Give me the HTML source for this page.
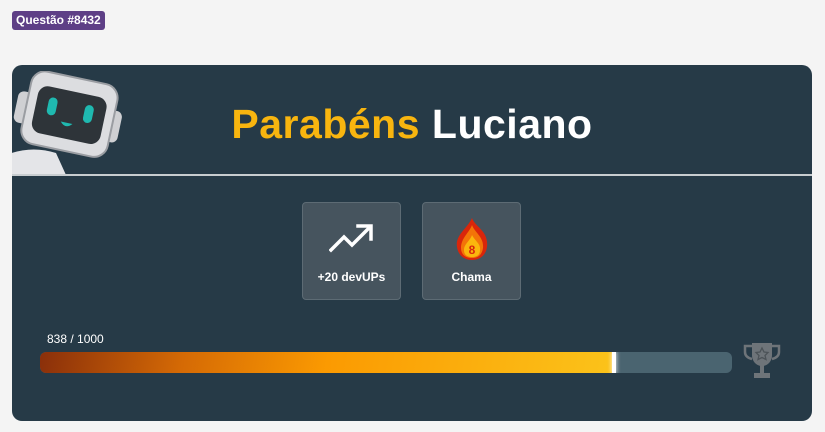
<!DOCTYPE html>
<html><head><style>
body{margin:0;width:825px;height:432px;background:#f4f4f4;font-family:"Liberation Sans",sans-serif;position:relative;overflow:hidden}
.tag{position:absolute;left:12px;top:11px;height:19px;padding:0 4px;background:#5e3f86;color:#fff;font-weight:bold;font-size:12px;line-height:19px;border-radius:3px}
.card{position:absolute;left:12px;top:65px;width:800px;height:356px;background:#263a47;border-radius:10px;overflow:hidden}
.line{position:absolute;left:0;top:109px;width:800px;height:2px;background:#c8cdd0}
.title{position:absolute;left:0;width:800px;top:36px;text-align:center;font-size:41px;font-weight:bold;color:#fff;letter-spacing:0.5px}
.title span{color:#f8b50f}
.box{position:absolute;top:137px;width:97px;height:96px;background:#46545e;border:1.5px solid #5d6b74;border-radius:4px;color:#fff;font-size:12px;font-weight:bold;text-align:center}
.box .lbl{position:absolute;top:67px;width:100%}
.val{position:absolute;left:35px;top:267px;color:#fff;font-size:12px}
.bar{position:absolute;left:28px;top:287px;width:692px;height:21px;background:#4a6470;border-radius:6px;overflow:hidden}
.fill{position:absolute;left:0;top:0;width:574px;height:21px;background:linear-gradient(100deg,#8a2f0a 0%,#d56a05 25%,#fb9a01 50%,#fbc31a 100%);border-radius:6px 0 0 6px}
.mark{position:absolute;left:572px;top:-1px;width:4px;height:23px;background:#fff;box-shadow:0 0 5px #fff}
</style></head><body>
<div class="tag">Questão #8432</div>
<div class="card">
<svg style="position:absolute;left:-6px;top:6px" width="120" height="104" viewBox="0 0 120 104">
<path d="M0 84 Q25 74 50 82 L60 104 L0 104Z" fill="#e4e5e8"/>
<g transform="rotate(12 62 50)">
<rect x="8" y="30" width="14" height="32" rx="6" fill="#cfd0d3"/>
<rect x="102" y="30" width="12" height="32" rx="6" fill="#cfd0d3"/>
<rect x="18" y="6" width="88" height="74" rx="14" fill="#dcdde0" stroke="#9a9da2" stroke-width="2"/>
<rect x="27" y="20" width="70" height="48" rx="10" fill="#2e3439"/>
<rect x="39" y="30" width="9" height="18" rx="4.5" fill="#1fb9b0"/>
<rect x="76" y="30" width="9" height="18" rx="4.5" fill="#1fb9b0"/>
<path d="M55 52 Q61 59 67 52 Z" fill="#1fb9b0"/>
</g>
</svg>
<div class="line"></div>
<div class="title"><span>Parabéns</span> Luciano</div>
<div class="box" style="left:290px"><svg style="position:absolute;left:26px;top:20px" width="46" height="32" viewBox="0 0 46 32"><path d="M2 27 L15 14 L23 22 L41 4 M29 3 H42 V16" fill="none" stroke="#fff" stroke-width="3.5" stroke-linecap="square"/></svg><div class="lbl">+20 devUPs</div></div>
<div class="box" style="left:410px"><svg style="position:absolute;left:30px;top:14px" width="38" height="44" viewBox="0 0 38 44"><path d="M19 1 C22 10 36 14 34 30 C33 38 27 43 19 43 C11 43 5 38 4 30 C2 18 14 12 19 1Z" fill="#d9260b"/><path d="M19 8 C22 16 31 20 30 31 C29 38 25 41 19 41 C13 41 8 38 8 31 C8 21 16 16 19 8Z" fill="#f37408"/><path d="M19 18 C22 24 28 27 27 33 C27 38 24 40 19 40 C14 40 11 38 11 33 C11 27 17 24 19 18Z" fill="#fbb60d"/><text x="19" y="37" font-size="12" fill="#d9260b" text-anchor="middle" font-family="Liberation Sans">8</text></svg><div class="lbl">Chama</div></div>
<div class="val">838 / 1000</div>
<div class="bar"><div class="fill"></div><div class="mark"></div></div>
<svg style="position:absolute;left:730px;top:276px" width="40" height="40" viewBox="0 0 40 40"><path d="M10 2 H30 V14 C30 21 25 25 20 25 C15 25 10 21 10 14Z" fill="#6e7479"/><path d="M10 5 H3 V11 C3 15 6 17 10 18 M30 5 H37 V11 C37 15 34 17 30 18" fill="none" stroke="#6e7479" stroke-width="2.5"/><path d="M20 7 L22 11 L26 11.5 L23 14.5 L24 18.5 L20 16.5 L16 18.5 L17 14.5 L14 11.5 L18 11Z" fill="none" stroke="#4c5358" stroke-width="1.3"/><rect x="18" y="24" width="4" height="8" fill="#6e7479"/><rect x="12" y="32" width="16" height="5" fill="#6e7479"/></svg>
</div>
</body></html>
